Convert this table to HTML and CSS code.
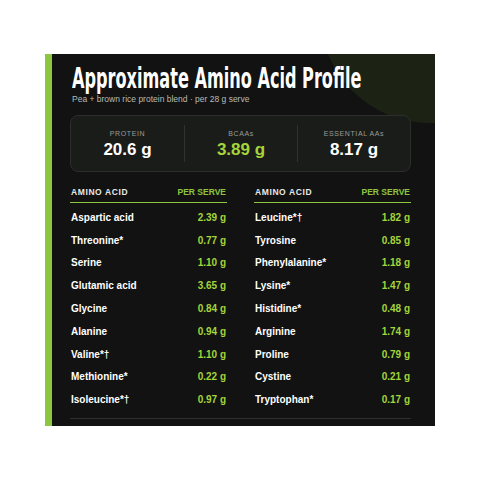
FILE: index.html
```html
<!DOCTYPE html>
<html lang="en">
<head>
    <meta charset="UTF-8">
    <title>Approximate Amino Acid Profile</title>
    <link rel="stylesheet" href="styles.css">
</head>
<body>
    <div class="card">
        <h1><span>Approximate Amino Acid Profile</span></h1>
        <p class="subtitle">Pea + brown rice protein blend · per 28 g serve</p>

        <div class="stats">
            <div class="stat">
                <div class="stat-label">PROTEIN</div>
                <div class="stat-value">20.6 g</div>
            </div>
            <div class="stat">
                <div class="stat-label">BCAAs</div>
                <div class="stat-value accent">3.89 g</div>
            </div>
            <div class="stat">
                <div class="stat-label">ESSENTIAL AAs</div>
                <div class="stat-value">8.17 g</div>
            </div>
        </div>

        <div class="tables">
            <div class="amino-table">
                <div class="row head"><span>AMINO ACID</span><span class="val">PER SERVE</span></div>
                <div class="row"><span>Aspartic acid</span><span class="val">2.39 g</span></div>
                <div class="row"><span>Threonine*</span><span class="val">0.77 g</span></div>
                <div class="row"><span>Serine</span><span class="val">1.10 g</span></div>
                <div class="row"><span>Glutamic acid</span><span class="val">3.65 g</span></div>
                <div class="row"><span>Glycine</span><span class="val">0.84 g</span></div>
                <div class="row"><span>Alanine</span><span class="val">0.94 g</span></div>
                <div class="row"><span>Valine*†</span><span class="val">1.10 g</span></div>
                <div class="row"><span>Methionine*</span><span class="val">0.22 g</span></div>
                <div class="row"><span>Isoleucine*†</span><span class="val">0.97 g</span></div>
            </div>
            <div class="amino-table">
                <div class="row head"><span>AMINO ACID</span><span class="val">PER SERVE</span></div>
                <div class="row"><span>Leucine*†</span><span class="val">1.82 g</span></div>
                <div class="row"><span>Tyrosine</span><span class="val">0.85 g</span></div>
                <div class="row"><span>Phenylalanine*</span><span class="val">1.18 g</span></div>
                <div class="row"><span>Lysine*</span><span class="val">1.47 g</span></div>
                <div class="row"><span>Histidine*</span><span class="val">0.48 g</span></div>
                <div class="row"><span>Arginine</span><span class="val">1.74 g</span></div>
                <div class="row"><span>Proline</span><span class="val">0.79 g</span></div>
                <div class="row"><span>Cystine</span><span class="val">0.21 g</span></div>
                <div class="row"><span>Tryptophan*</span><span class="val">0.17 g</span></div>
            </div>
        </div>
        <div class="bottom-rule"></div>
    </div>
</body>
</html>
```

FILE: styles.css
```css
* {
    margin: 0;
    padding: 0;
    box-sizing: border-box;
}

body {
    background: #fff;
    font-family: 'Liberation Sans', Arial, sans-serif;
    padding: 54px 45px;
}

.card {
    position: relative;
    overflow: hidden;
    width: 390px;
    height: 372px;
    background: #111211;
    border-left: 7px solid #8dc63f;
    padding: 11px 24px 0 18px;
    color: #fff;
}

/* decorative blob, top right */
.card::before {
    content: '';
    position: absolute;
    width: 220px;
    height: 220px;
    border-radius: 50%;
    background: #1c2314;
    left: 268px;
    top: -151px;
}

h1 {
    position: relative;
    font-family: 'DejaVu Sans Condensed', 'DejaVu Sans', sans-serif;
    font-stretch: condensed;
    font-weight: bold;
    font-size: 28px;
    line-height: 28px;
    white-space: nowrap;
    padding-left: 2px;
}

h1 span {
    display: inline-block;
    transform: scaleX(0.64);
    transform-origin: left center;
}

.subtitle {
    position: relative;
    font-size: 8.5px;
    line-height: 10px;
    color: #b9bcb6;
    padding-left: 2px;
    margin-top: 1px;
}

.stats {
    position: relative;
    display: grid;
    grid-template-columns: 1fr 1fr 1fr;
    margin-top: 11px;
    height: 57px;
    background: #1a1c1a;
    border: 1px solid #2b2e2a;
    border-radius: 8px;
    padding: 9px 0;
}

.stat {
    display: flex;
    flex-direction: column;
    align-items: center;
    justify-content: center;
    gap: 3px;
    padding-top: 2px;
}

.stat + .stat {
    border-left: 1px solid #2f322e;
}

.stat-label {
    font-size: 7px;
    letter-spacing: 0.6px;
    color: #9a9d97;
}

.stat-value {
    font-size: 17px;
    font-weight: bold;
}

.accent {
    color: #a4d53a;
}

.tables {
    display: grid;
    grid-template-columns: 157px 157px;
    justify-content: space-between;
    margin-top: 10px;
}

.row {
    display: flex;
    justify-content: space-between;
    align-items: center;
    height: 22.8px;
    font-size: 10px;
    font-weight: bold;
    padding: 0 1px;
}

.row .val {
    color: #a4d53a;
}

.row.head {
    height: 21px;
    font-size: 8.5px;
    letter-spacing: 0.6px;
    color: #e8e8e6;
    border-bottom: 1.5px solid #8dc63f;
    margin-bottom: 3px;
}

.row.head .val {
    color: #8dc63f;
    letter-spacing: 0;
}

.bottom-rule {
    height: 1px;
    background: #2e302d;
    margin-top: 7px;
}
```
